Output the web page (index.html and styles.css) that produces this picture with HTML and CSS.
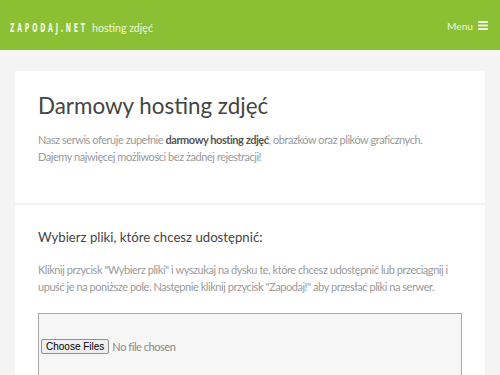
FILE: index.html
```html
<!DOCTYPE html>
<html lang="pl">
<head>
<meta charset="utf-8">
<title>Zapodaj.net - hosting zdjęć</title>
<link rel="stylesheet" href="styles.css">
</head>
<body>
<header class="topbar">
  <div class="brand">
    <span class="logo"><span class="logo-text">ZAPODAJ.NET</span></span>
    <span class="tagline">hosting zdjęć</span>
  </div>
  <a class="menu" href="#"><span>Menu</span>
    <svg class="burger" width="10" height="9" viewBox="0 0 10 9"><rect x="0" y="0" width="10" height="2" rx="0.4"/><rect x="0" y="3.5" width="10" height="2" rx="0.4"/><rect x="0" y="7" width="10" height="2" rx="0.4"/></svg>
  </a>
</header>
<main class="content">
  <section class="card intro">
    <h1 class="title">Darmowy hosting zdjęć</h1>
    <p class="text">Nasz serwis oferuje zupełnie <strong>darmowy hosting zdjęć</strong>, obrazków oraz plików graficznych.<br>Dajemy najwięcej możliwości bez żadnej rejestracji!</p>
  </section>
  <section class="card upload">
    <h2 class="subtitle">Wybierz pliki, które chcesz udostępnić:</h2>
    <p class="text">Kliknij przycisk "Wybierz pliki" i wyszukaj na dysku te, które chcesz udostępnić lub przeciągnij i<br>upuść je na poniższe pole. Następnie kliknij przycisk "Zapodaj!" aby przesłać pliki na serwer.</p>
    <div class="dropzone">
      <div class="file-row"><span class="file-btn">Choose Files</span><span class="file-none">No file chosen</span></div>
    </div>
  </section>
</main>
</body>
</html>
```
FILE: styles.css
```css
html, body { margin: 0; padding: 0; }
body {
  background: #f4f4f4;
  font-family: Lato, "Noto Sans", sans-serif;
  color: #333;
  overflow: hidden;
}
.topbar {
  height: 50px;
  box-sizing: border-box;
  background: #8bc034;
  display: flex;
  align-items: center;
  justify-content: space-between;
  padding: 1px 12px 0 10px;
}
.brand { display: flex; align-items: baseline; gap: 6px; }
.logo { width: 76px; white-space: nowrap; }
.logo-text {
  display: inline-block;
  font-family: "DejaVu Sans", sans-serif;
  font-stretch: condensed;
  font-weight: bold;
  font-size: 11.5px;
  letter-spacing: 4.6px;
  color: #f6fbec;
  transform: scaleX(0.6);
  transform-origin: 0 50%;
}
.tagline { font-family: Lato, sans-serif; font-size: 10.6px; color: #eef7dc; }
.menu {
  display: flex; align-items: center; gap: 5px;
  font-family: Lato, sans-serif; font-size: 10.2px; color: #eef7dc; text-decoration: none;
}
.burger { fill: #eef7dc; display: block; }
.content {
  padding: 21px 15px 0;
  display: flex; flex-direction: column; gap: 2px;
}
.card { background: #fff; padding: 0 23px; }
.intro { padding-top: 21px; padding-bottom: 38px; }
.title {
  margin: 0 0 11px;
  font-family: Lato, sans-serif;
  font-weight: 400;
  font-size: 22.4px;
  line-height: 28px;
  color: #444;
}
.text {
  margin: 0;
  font-family: Lato, sans-serif;
  font-size: 11px;
  letter-spacing: -0.45px;
  line-height: 17px;
  color: #9a9a9a;
  white-space: nowrap;
}
.text strong { color: #555; }
.upload { padding-top: 23px; }
.subtitle {
  margin: 0 0 15px;
  font-family: Lato, sans-serif;
  font-weight: 400;
  font-size: 13.2px;
  line-height: 18px;
  color: #444;
}
.upload .text { margin-bottom: 18px; }
.dropzone {
  border: 1px solid #a9a9a9;
  background: #f6f6f6;
  height: 90px;
  padding: 25px 2px 0;
  box-sizing: border-box;
}
.file-row { display: flex; align-items: center; gap: 3px; }
.file-btn {
  font-family: "Liberation Sans", Arial, sans-serif;
  font-size: 10px;
  line-height: 13px;
  color: #000;
  background: #efefef;
  border: 1px solid #8f8f8f;
  border-radius: 2px;
  padding: 0 4px;
}
.file-none { font-family: Lato, sans-serif; font-size: 11px; letter-spacing: -0.45px; color: #888; }
```
